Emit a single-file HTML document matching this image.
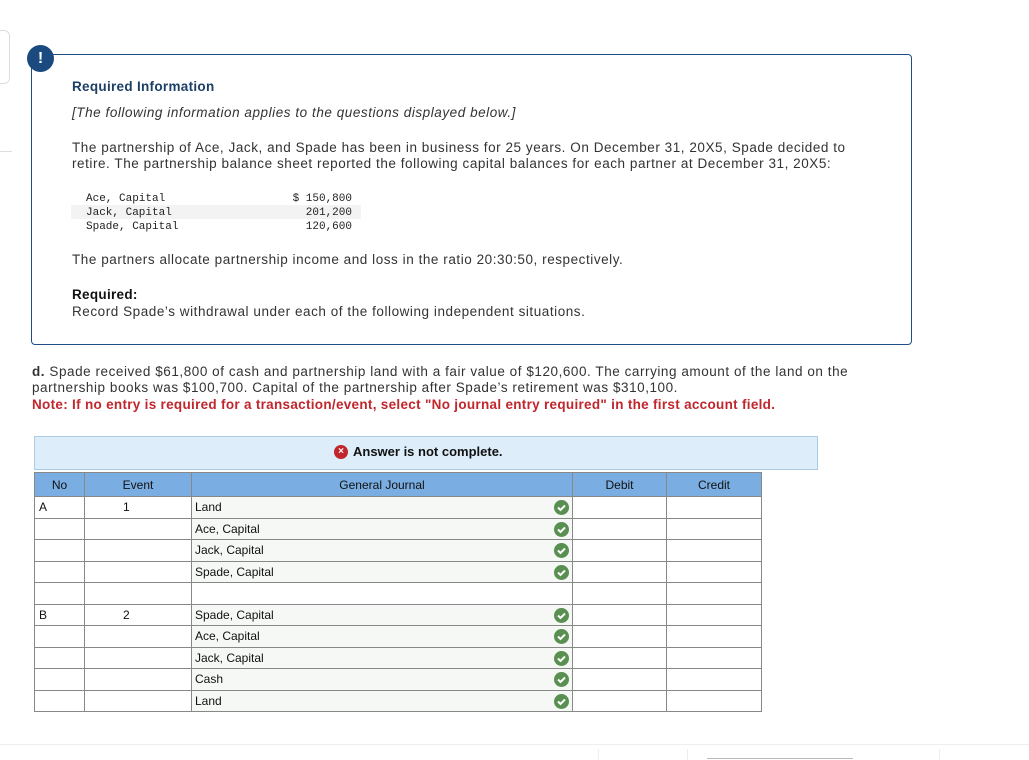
<!DOCTYPE html><html><head><style>
body{margin:0;width:1029px;height:760px;position:relative;background:#fff;font-family:"Liberation Sans",sans-serif;color:#333;overflow:hidden}
.abs{position:absolute}
.box{left:31px;top:54px;width:879px;height:289px;border:1px solid #1f4e86;border-radius:0 4px 4px 4px}
.t{font-size:13.5px;line-height:16px;white-space:nowrap;letter-spacing:0.55px}
.mono{font-family:"Liberation Mono",monospace;font-size:11px;line-height:14px;color:#222}
table{border-collapse:collapse;position:absolute;left:34px;top:472px;font-size:12px;table-layout:fixed;width:727px}
td{border:1px solid #888;height:20.5px;padding:0 4px;color:#111;overflow:hidden;white-space:nowrap}
th{background:#7aade2;border:1px solid #888;font-weight:normal;height:21px;color:#111;font-size:12px}
td.j{background:#f6f8f5;position:relative;padding-left:3px}
td.e{padding-left:38px}
.ck{position:absolute;right:3px;top:3px;width:15px;height:15px;border-radius:50%;background:#5a8f52}
.ck svg{position:absolute;left:0;top:0}
</style></head><body>
<div class="abs" style="left:-10px;top:30px;width:18px;height:52px;border:1px solid #ddd;border-radius:6px"></div>
<div class="abs" style="left:0;top:151px;width:12px;border-top:1px solid #ddd"></div>
<div class="abs box"></div>
<div class="abs" style="left:27px;top:45px;width:27px;height:27px;border-radius:50%;background:#1b4a80;color:#fff;font-weight:bold;text-align:center;line-height:27px;font-size:16px">!</div>
<div class="abs t" style="left:72px;top:79px;font-weight:bold;color:#1c3f66;letter-spacing:0.3px">Required Information</div>
<div class="abs t" style="left:72px;top:105px;font-style:italic">[The following information applies to the questions displayed below.]</div>
<div class="abs t" style="left:72px;top:140px">The partnership of Ace, Jack, and Spade has been in business for 25 years. On December 31, 20X5, Spade decided to<br>retire. The partnership balance sheet reported the following capital balances for each partner at December 31, 20X5:</div>
<div class="abs" style="left:71px;top:205px;width:290px;height:14px;background:#f3f3f3"></div>
<div class="abs mono" style="left:86px;top:192px">Ace, Capital<br>Jack, Capital<br>Spade, Capital</div>
<div class="abs mono" style="left:270px;top:192px;width:82px;text-align:right">$ 150,800<br>201,200<br>120,600</div>
<div class="abs t" style="left:72px;top:252px">The partners allocate partnership income and loss in the ratio 20:30:50, respectively.</div>
<div class="abs t" style="left:72px;top:287px;font-weight:bold;color:#111;letter-spacing:0.3px">Required:</div>
<div class="abs t" style="left:72px;top:304px">Record Spade’s withdrawal under each of the following independent situations.</div>
<div class="abs t" style="left:32px;top:364px"><b>d.</b> Spade received $61,800 of cash and partnership land with a fair value of $120,600. The carrying amount of the land on the<br>partnership books was $100,700. Capital of the partnership after Spade’s retirement was $310,100.</div>
<div class="abs t" style="left:32px;top:397px;font-weight:bold;color:#c0262c;letter-spacing:0.3px">Note: If no entry is required for a transaction/event, select "No journal entry required" in the first account field.</div>
<div class="abs" style="left:34px;top:436px;width:782px;height:32px;background:#ddeefa;border:1px solid #a8cbe8"></div>
<div class="abs" style="left:334px;top:445px;width:14px;height:14px;border-radius:50%;background:#c0262c;color:#fff;font-size:10px;font-weight:bold;text-align:center;line-height:14px">×</div>
<div class="abs" style="left:353px;top:444px;font-size:13px;font-weight:bold;color:#111">Answer is not complete.</div>
<table>
<colgroup><col style="width:50px"><col style="width:107px"><col style="width:381px"><col style="width:94px"><col style="width:95px"></colgroup>
<tr><th>No</th><th>Event</th><th>General Journal</th><th>Debit</th><th>Credit</th></tr>
<tr><td>A</td><td class="e">1</td><td class="j">Land<span class="ck"><svg width="15" height="15"><path d="M4 7.5l2.5 2.5 4.5-4.5" stroke="#fff" stroke-width="2" fill="none"/></svg></span></td><td></td><td></td></tr>
<tr><td></td><td></td><td class="j">Ace, Capital<span class="ck"><svg width="15" height="15"><path d="M4 7.5l2.5 2.5 4.5-4.5" stroke="#fff" stroke-width="2" fill="none"/></svg></span></td><td></td><td></td></tr>
<tr><td></td><td></td><td class="j">Jack, Capital<span class="ck"><svg width="15" height="15"><path d="M4 7.5l2.5 2.5 4.5-4.5" stroke="#fff" stroke-width="2" fill="none"/></svg></span></td><td></td><td></td></tr>
<tr><td></td><td></td><td class="j">Spade, Capital<span class="ck"><svg width="15" height="15"><path d="M4 7.5l2.5 2.5 4.5-4.5" stroke="#fff" stroke-width="2" fill="none"/></svg></span></td><td></td><td></td></tr>
<tr><td></td><td></td><td></td><td></td><td></td></tr>
<tr><td>B</td><td class="e">2</td><td class="j">Spade, Capital<span class="ck"><svg width="15" height="15"><path d="M4 7.5l2.5 2.5 4.5-4.5" stroke="#fff" stroke-width="2" fill="none"/></svg></span></td><td></td><td></td></tr>
<tr><td></td><td></td><td class="j">Ace, Capital<span class="ck"><svg width="15" height="15"><path d="M4 7.5l2.5 2.5 4.5-4.5" stroke="#fff" stroke-width="2" fill="none"/></svg></span></td><td></td><td></td></tr>
<tr><td></td><td></td><td class="j">Jack, Capital<span class="ck"><svg width="15" height="15"><path d="M4 7.5l2.5 2.5 4.5-4.5" stroke="#fff" stroke-width="2" fill="none"/></svg></span></td><td></td><td></td></tr>
<tr><td></td><td></td><td class="j">Cash<span class="ck"><svg width="15" height="15"><path d="M4 7.5l2.5 2.5 4.5-4.5" stroke="#fff" stroke-width="2" fill="none"/></svg></span></td><td></td><td></td></tr>
<tr><td></td><td></td><td class="j">Land<span class="ck"><svg width="15" height="15"><path d="M4 7.5l2.5 2.5 4.5-4.5" stroke="#fff" stroke-width="2" fill="none"/></svg></span></td><td></td><td></td></tr>
</table>
<div class="abs" style="left:0;top:744px;width:1029px;border-top:1px solid #eee"></div>
<div class="abs" style="left:598px;top:749px;height:11px;border-left:1px solid #eee"></div>
<div class="abs" style="left:687px;top:749px;height:11px;border-left:1px solid #eee"></div>
<div class="abs" style="left:939px;top:749px;height:11px;border-left:1px solid #eee"></div>
<div class="abs" style="left:707px;top:758px;width:146px;border-top:1px solid #bbb"></div>
</body></html>
